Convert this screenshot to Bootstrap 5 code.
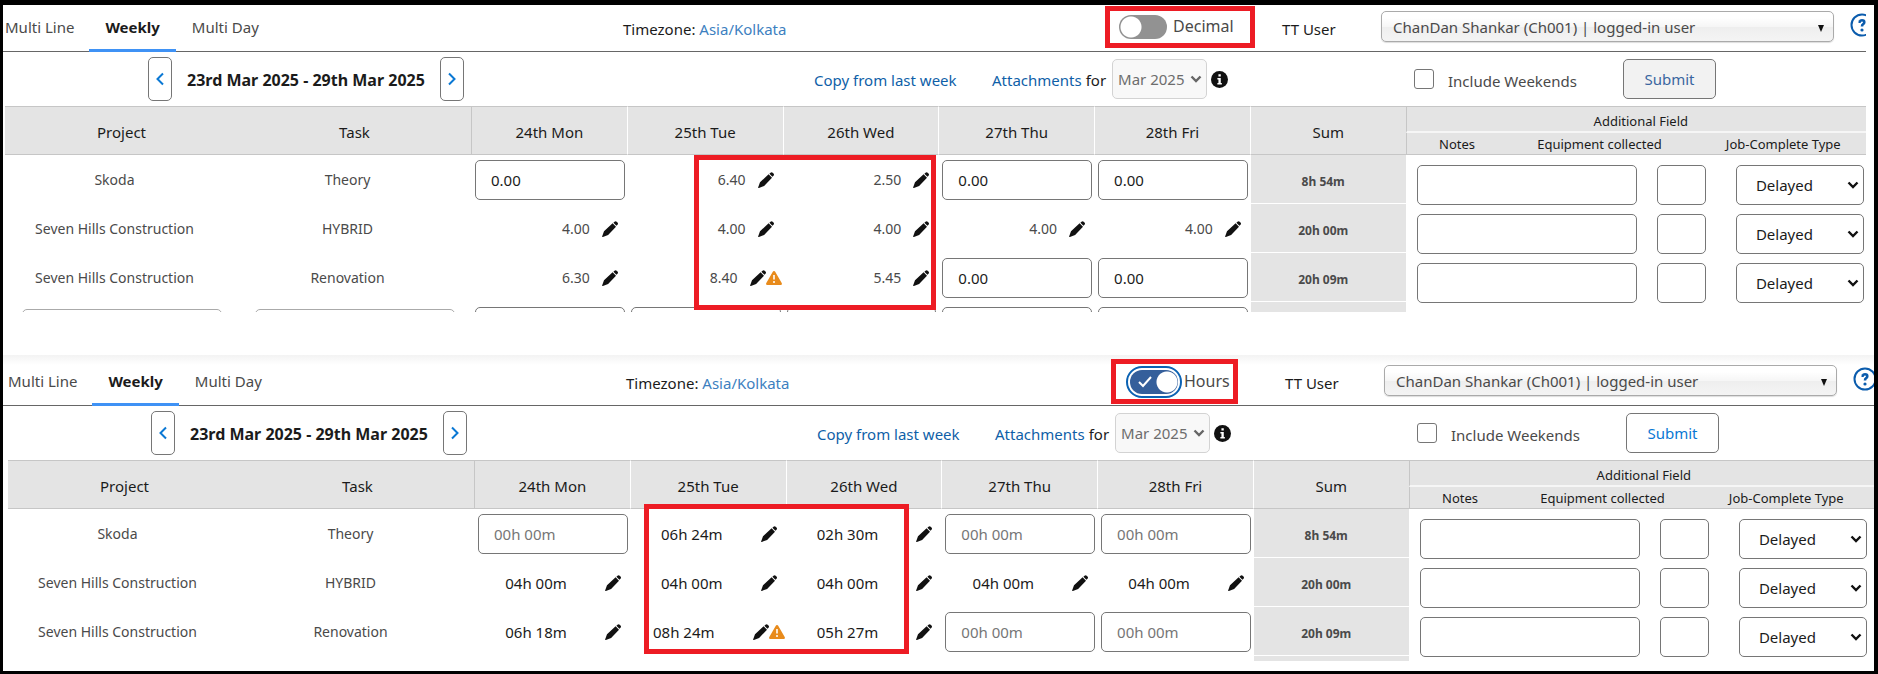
<!DOCTYPE html>
<html lang="en">
<head>
<meta charset="utf-8">
<meta name="viewport" content="width=device-width, initial-scale=1">
<title>Weekly timesheet</title>
<link href="https://cdn.jsdelivr.net/npm/bootstrap@5.3.0/dist/css/bootstrap.min.css" rel="stylesheet">
<style>
  :root { --ink: #1b1b1b; --soft: #4a4a4a; --line: #767676; --head: #e4e4e4; --rule: #c6c6c6; --flag: #ed1c24; --link: #0f5fa8; }
  body { font-family: "Noto Sans", "Open Sans", sans-serif; font-size: 15px; line-height: 20px; color: var(--ink); background: #fff; border: solid #000; border-width: 5px 4px 3px 3px; min-height: 100vh; }
  a { color: var(--link); text-decoration: none; }
  button, input, select { font: inherit; }

  .panel { overflow: hidden; }
  .panel-decimal { height: 307px; margin-right: 8px; margin-bottom: 43px; }
  .panel-hours { height: 306px; padding-left: 3px; background: linear-gradient(#f3f3f3, #fff 10px); }
  .panel-decimal .sheet { width: calc(100% + 9px); }
  .panel-hours .sheet { width: calc(100% + 4px); }

  .topbar { display: grid; grid-template-columns: 620fr 482fr 177fr 99fr 453fr 41fr; height: 47px; border-bottom: 1px solid #666; }
  .panel-hours .topbar { height: 51px; padding: 4px 0 0 3px; margin-left: -3px; }
  .topbar > *, .toolbar > * { min-width: 0; white-space: nowrap; }
  .tabs a { color: var(--soft); padding: 0 16px; height: 47px; display: flex; align-items: center; border-bottom: 3px solid transparent; }
  .tabs a:first-child { padding: 0 15px 0 2px; }
  .tabs a.active { color: var(--ink); font-weight: 700; border-color: #3f92f5; }
  .tz a { color: #3d7fbf; }

  .flag-box { border: 5px solid var(--flag); }
  .mode { height: 42px; width: 150px; margin-top: 1px; padding-left: 9px; font-size: 16px; color: var(--soft); }
  .mode label { padding-left: 6px; padding-bottom: 2px; }
  .mode-hours { height: 45px; width: 127px; margin: 0 0 0 3px; padding-left: 14px; }
  .mode .form-check-input { width: 48px; height: 24px; margin: 0; border: 0; border-radius: 12px; background: #929292 radial-gradient(circle at 12px 12px, #fff 10px, transparent 11px); box-shadow: none; }
  .mode .form-check-input:checked { background: #355f9b radial-gradient(circle at 37px 12px, #fff 10px, transparent 11px); outline: 2px solid #0b62b3; outline-offset: 2px; }
  .tick { left: 8px; top: 6px; pointer-events: none; }

  .user-select { height: 31px; margin-top: 6px; padding: 0 11px; width: 100%; border: 1px solid #aaa; border-radius: 5px; color: var(--soft); appearance: none; box-shadow: 0 1px 1px #ddd;
    background: url("data:image/svg+xml,%3Csvg xmlns='http://www.w3.org/2000/svg' viewBox='0 0 6 7'%3E%3Cpath d='M0 0h6L3 7z' fill='%23111'/%3E%3C/svg%3E") no-repeat right 9px top 13px / 6px 7px, linear-gradient(#fff 20%, #f6f6f6 50%, #eee 52%, #f4f4f4); }

  .toolbar { display: grid; grid-template-columns: 145fr 666fr 178fr 422fr 209fr 252fr; height: 54px; align-items: center; }
  .step { width: 24px; height: 44px; padding: 0; border: 1px solid var(--line); border-radius: 5px; background: #fff; color: #0a78d4; display: flex; align-items: center; justify-content: center; }
  .period { font-size: 16px; padding: 2px 15px 0; }
  .drop { padding-top: 2px; }
  .month { width: 95px; height: 40px; margin-left: 2px; padding: 0 5px; border: 1px solid #d3d3d3; border-radius: 5px; color: #6d6d6d; opacity: 1; appearance: none;
    background: #f8f8f8 url("data:image/svg+xml,%3Csvg xmlns='http://www.w3.org/2000/svg' viewBox='0 0 12 8'%3E%3Cpath d='M1.500 1.500L6 6l4.500-4.500' fill='none' stroke='%23666' stroke-width='2.400'/%3E%3C/svg%3E") no-repeat right 4px center / 12px 8px; }
  .toolbar .form-check-input { width: 20px; height: 20px; margin: 0; border: 1px solid var(--line); border-radius: 3px; }
  .weekend { padding: 3px 0 0 14px; color: var(--soft); }
  .submit { width: 93px; height: 40px; padding: 0; border: 1px solid var(--line); border-radius: 5px; background: #fff; color: #0a78d4; }
  .submit.is-idle { background: #f2f2f2; color: #3a66a0; }

  .grid-wrap { margin-left: 2px; position: relative; }
  .ts-grid { table-layout: fixed; width: 100%; border-collapse: separate; border-spacing: 0; margin: 0; color: var(--soft); font-size: 14px; }
  .ts-grid > :not(caption) > * > * { padding: 0; border: 0; background: none; box-shadow: none; }
  .c-name { width: 12.46%; } .c-day { width: 8.33%; } .c-note { width: 5.45%; } .c-equip { width: 9.84%; }
  .ts-grid > thead > tr > th { background: var(--head); color: var(--ink); font-weight: 400; font-size: 15px; text-align: center; vertical-align: middle; border-bottom: 1px solid var(--rule); }
  .ts-grid > thead > tr:first-child { height: 27px; }
  .ts-grid > thead > tr:last-child { height: 22px; }
  .ts-grid > thead > tr:first-child > th { border-top: 1px solid var(--rule); }
  .ts-grid > thead > tr > th[rowspan] { padding-top: 2px; }
  .ts-grid > thead > tr > th.day { border-left: 1px solid #fff; }
  .ts-grid > thead > tr > th.edge { border-left: 1px solid var(--rule); }
  .ts-grid > thead > tr > th.small-head { font-size: 13px; line-height: 20px; }
  .ts-grid > thead > tr > th.group { border-bottom: 2px solid #f6f6f6; padding-top: 3px; }
  .ts-grid > tbody > tr { height: 49px; }
  .ts-grid > tbody > tr > td { vertical-align: middle; }
  .ts-grid > tbody > tr > .name { text-align: center; padding-right: 14px; }
  .ts-grid > tbody > tr > .sum { background: var(--head); border-left: 1px solid #fff; border-bottom: 1px solid #fff; font-weight: 700; font-size: 12px; text-align: center; padding: 6px 10px 0 0; }
  .ts-grid > tbody > tr > .entry { padding: 5px 2px 4px 4px; }
  .ts-grid > tbody > tr > .extra { padding: 10px 11px 0; }
  .ts-grid > tbody > tr > .new-name { vertical-align: top; padding: 7px 0 0 17px; }
  .box { display: block; height: 40px; min-width: 0; border: 1px solid var(--line); border-radius: 5px; background: #fff; color: var(--ink); padding: 0 15px; font-size: 15px; }
  .box::placeholder { color: #767676; opacity: 1; }
  .entry .box { width: 100%; }
  .extra-row { display: grid; grid-template-columns: 240fr 79fr 128fr; height: 39px; }
  .extra-row input:first-child { margin-right: 20px; }
  .extra-row input:nth-child(2) { margin-right: 30px; }
  .extra-row select { padding: 0 19px; appearance: none;
    background: #fff url("data:image/svg+xml,%3Csvg xmlns='http://www.w3.org/2000/svg' viewBox='0 0 12 8'%3E%3Cpath d='M1.500 1.500L6 6l4.500-4.500' fill='none' stroke='%23111' stroke-width='2.400'/%3E%3C/svg%3E") no-repeat right 4px center / 12px 8px; }
  .done { display: flex; align-items: center; justify-content: flex-end; gap: 12px; padding-right: 9px; }
  .done.warned { padding-right: 1px; }
  .panel-hours .done { gap: 38px; color: var(--ink); font-size: 15px; }
  .icons { display: flex; }
  .icons button { border: 0; padding: 0; background: none; display: flex; color: #111; }
  .picker { width: 200px; max-width: 93%; border-color: #aaa; }
  .flag-over { position: absolute; pointer-events: none; }
  .flag-decimal { left: 36.84%; width: 12.94%; top: 49px; height: 155px; }
  .flag-hours { left: 34%; width: 14.17%; top: 44px; height: 150px; }
</style>
</head>
<body>
<svg class="d-none" aria-hidden="true">
  <symbol id="pencil" viewBox="0 0 16 16"><path d="M11.400 1.700 12.500.700a1.600 1.600 0 0 1 2.200 0l.8.800a1.600 1.600 0 0 1 0 2.200L14.400 4.800zM10.600 2.300l3.400 3.400-7.900 8.200-5.200 2a.5.500 0 0 1-.7-.7l1.800-4.900z" fill="currentColor"/></symbol>
  <symbol id="warn" viewBox="0 0 16 14"><path d="M8 0c.6 0 1 .3 1.200.7l6.500 11.300c.5.900 0 2-1.100 2H1.400c-1.100 0-1.600-1.100-1.100-2L6.800.700C7 .300 7.400 0 8 0z" fill="#e88b1c"/><path d="M8 4v4.500" stroke="#fff" stroke-width="1.600"/><circle cx="8" cy="11" r="1" fill="#fff"/></symbol>
  <symbol id="info" viewBox="0 0 16 16"><circle cx="8" cy="8" r="8" fill="#111"/><path d="M7 3h2.200v2.200H7zM6 6.500h3.200v4.700h1v1.500H6v-1.500h1V8H6z" fill="#fff"/></symbol>
  <symbol id="help" viewBox="0 0 24 24"><circle cx="12" cy="12" r="10.500" fill="none" stroke="#0b5cad" stroke-width="2"/><path d="M8.500 8.800h1.200c.4-1 1.200-1.500 2.300-1.500 1.300 0 2.300.8 2.300 2 0 1-.6 1.500-1.300 2-.7.500-1 1-1 2.200" fill="none" stroke="#0b5cad" stroke-width="2.600"/><circle cx="12" cy="17" r="1.600" fill="#0b5cad"/></symbol>
  <symbol id="prev" viewBox="0 0 10 14"><path d="M8 1.500 2.500 7 8 12.500" fill="none" stroke="currentColor" stroke-width="2"/></symbol>
  <symbol id="next" viewBox="0 0 10 14"><path d="M2 1.500 7.500 7 2 12.500" fill="none" stroke="currentColor" stroke-width="2"/></symbol>
</svg>

<section class="panel panel-decimal" aria-label="Timesheet in decimal format">
  <div class="sheet">
    <header class="topbar">
      <nav class="tabs d-flex"><a href="#">Multi Line</a><a class="active" href="#" aria-current="page">Weekly</a><a href="#">Multi Day</a></nav>
      <div class="tz d-flex align-items-center">Timezone:&nbsp; <a href="#">Asia/Kolkata</a></div>
      <div><div class="mode flag-box d-flex align-items-center"><input class="form-check-input" type="checkbox" role="switch" id="mode1"><label for="mode1">Decimal</label></div></div>
      <label class="d-flex align-items-center" for="user1">TT User</label>
      <div><select class="user-select" id="user1"><option>ChanDan Shankar (Ch001) | logged-in user</option></select></div>
      <a class="ps-3 pt-2" href="#" aria-label="Help"><svg width="24" height="24"><use href="#help"/></svg></a>
    </header>
    <div class="toolbar">
      <span></span>
      <div class="d-flex align-items-center">
        <button class="step" type="button" aria-label="Previous week"><svg width="10" height="14"><use href="#prev"/></svg></button>
        <strong class="period">23rd Mar 2025 - 29th Mar 2025</strong>
        <button class="step" type="button" aria-label="Next week"><svg width="10" height="14"><use href="#next"/></svg></button>
      </div>
      <a class="drop" href="#">Copy from last week</a>
      <div class="d-flex align-items-center gap-1"><a class="drop" href="#">Attachments</a><label class="drop" for="month1">for</label><select class="month" id="month1" disabled><option>Mar 2025</option></select><svg width="17" height="17"><use href="#info"/></svg></div>
      <div class="d-flex align-items-center"><input class="form-check-input" type="checkbox" id="we1"><label class="weekend" for="we1">Include Weekends</label></div>
      <div><button class="submit is-idle" type="button">Submit</button></div>
    </div>
    <div class="grid-wrap">
      <table class="table ts-grid">
        <colgroup><col class="c-name"><col class="c-name"><col class="c-day" span="6"><col class="c-note"><col class="c-equip"><col></colgroup>
        <thead>
          <tr><th rowspan="2">Project</th><th rowspan="2">Task</th><th class="edge" rowspan="2">24th Mon</th><th class="day" rowspan="2">25th Tue</th><th class="day" rowspan="2">26th Wed</th><th class="day" rowspan="2">27th Thu</th><th class="day" rowspan="2">28th Fri</th><th class="day" rowspan="2">Sum</th><th class="edge small-head group" colspan="3">Additional Field</th></tr>
          <tr><th class="edge small-head">Notes</th><th class="small-head">Equipment collected</th><th class="small-head">Job-Complete Type</th></tr>
        </thead>
        <tbody>
          <tr>
            <td class="name">Skoda</td><td class="name">Theory</td>
            <td class="entry"><input class="box" value="0.00" aria-label="Skoda, 24th Mon"></td>
            <td><div class="done">6.40<span class="icons"><button type="button" aria-label="Edit"><svg width="16" height="16"><use href="#pencil"/></svg></button></span></div></td>
            <td><div class="done">2.50<span class="icons"><button type="button" aria-label="Edit"><svg width="16" height="16"><use href="#pencil"/></svg></button></span></div></td>
            <td class="entry"><input class="box" value="0.00" aria-label="Skoda, 27th Thu"></td>
            <td class="entry"><input class="box" value="0.00" aria-label="Skoda, 28th Fri"></td>
            <td class="sum">8h 54m</td>
            <td class="extra" colspan="3"><div class="extra-row"><input class="box" aria-label="Notes"><input class="box" aria-label="Equipment collected"><select class="box" aria-label="Job-Complete Type"><option>Delayed</option></select></div></td>
          </tr>
          <tr>
            <td class="name">Seven Hills Construction</td><td class="name">HYBRID</td>
            <td><div class="done">4.00<span class="icons"><button type="button" aria-label="Edit"><svg width="16" height="16"><use href="#pencil"/></svg></button></span></div></td>
            <td><div class="done">4.00<span class="icons"><button type="button" aria-label="Edit"><svg width="16" height="16"><use href="#pencil"/></svg></button></span></div></td>
            <td><div class="done">4.00<span class="icons"><button type="button" aria-label="Edit"><svg width="16" height="16"><use href="#pencil"/></svg></button></span></div></td>
            <td><div class="done">4.00<span class="icons"><button type="button" aria-label="Edit"><svg width="16" height="16"><use href="#pencil"/></svg></button></span></div></td>
            <td><div class="done">4.00<span class="icons"><button type="button" aria-label="Edit"><svg width="16" height="16"><use href="#pencil"/></svg></button></span></div></td>
            <td class="sum">20h 00m</td>
            <td class="extra" colspan="3"><div class="extra-row"><input class="box" aria-label="Notes"><input class="box" aria-label="Equipment collected"><select class="box" aria-label="Job-Complete Type"><option>Delayed</option></select></div></td>
          </tr>
          <tr>
            <td class="name">Seven Hills Construction</td><td class="name">Renovation</td>
            <td><div class="done">6.30<span class="icons"><button type="button" aria-label="Edit"><svg width="16" height="16"><use href="#pencil"/></svg></button></span></div></td>
            <td><div class="done warned">8.40<span class="icons"><button type="button" aria-label="Edit"><svg width="16" height="16"><use href="#pencil"/></svg></button><svg width="16" height="14" class="align-self-center"><use href="#warn"/></svg></span></div></td>
            <td><div class="done">5.45<span class="icons"><button type="button" aria-label="Edit"><svg width="16" height="16"><use href="#pencil"/></svg></button></span></div></td>
            <td class="entry"><input class="box" value="0.00" aria-label="Renovation, 27th Thu"></td>
            <td class="entry"><input class="box" value="0.00" aria-label="Renovation, 28th Fri"></td>
            <td class="sum">20h 09m</td>
            <td class="extra" colspan="3"><div class="extra-row"><input class="box" aria-label="Notes"><input class="box" aria-label="Equipment collected"><select class="box" aria-label="Job-Complete Type"><option>Delayed</option></select></div></td>
          </tr>
          <tr>
            <td class="new-name"><input class="box picker" aria-label="Project"></td><td class="new-name"><input class="box picker" aria-label="Task"></td>
            <td class="entry"><input class="box" aria-label="New line, 24th Mon"></td><td class="entry"><input class="box" aria-label="New line, 25th Tue"></td><td class="entry"><input class="box" aria-label="New line, 26th Wed"></td><td class="entry"><input class="box" aria-label="New line, 27th Thu"></td><td class="entry"><input class="box" aria-label="New line, 28th Fri"></td>
            <td class="sum"></td>
            <td class="extra" colspan="3"><div class="extra-row"><input class="box" aria-label="Notes"><input class="box" aria-label="Equipment collected"><select class="box" aria-label="Job-Complete Type"><option></option></select></div></td>
          </tr>
        </tbody>
      </table>
      <div class="flag-box flag-over flag-decimal"></div>
    </div>
  </div>
</section>

<section class="panel panel-hours" aria-label="Timesheet in hours format">
  <div class="sheet">
    <header class="topbar">
      <nav class="tabs d-flex"><a href="#">Multi Line</a><a class="active" href="#" aria-current="page">Weekly</a><a href="#">Multi Day</a></nav>
      <div class="tz d-flex align-items-center">Timezone:&nbsp; <a href="#">Asia/Kolkata</a></div>
      <div><div class="mode mode-hours flag-box d-flex align-items-center"><span class="position-relative d-flex"><input class="form-check-input" type="checkbox" role="switch" id="mode2" checked><svg class="tick position-absolute" width="14" height="12" viewBox="0 0 14 12"><path d="M1 6l4 4 8-9" fill="none" stroke="#fff" stroke-width="2"/></svg></span><label for="mode2">Hours</label></div></div>
      <label class="d-flex align-items-center" for="user2">TT User</label>
      <div><select class="user-select" id="user2"><option>ChanDan Shankar (Ch001) | logged-in user</option></select></div>
      <a class="ps-3 pt-2" href="#" aria-label="Help"><svg width="24" height="24"><use href="#help"/></svg></a>
    </header>
    <div class="toolbar">
      <span></span>
      <div class="d-flex align-items-center">
        <button class="step" type="button" aria-label="Previous week"><svg width="10" height="14"><use href="#prev"/></svg></button>
        <strong class="period">23rd Mar 2025 - 29th Mar 2025</strong>
        <button class="step" type="button" aria-label="Next week"><svg width="10" height="14"><use href="#next"/></svg></button>
      </div>
      <a class="drop" href="#">Copy from last week</a>
      <div class="d-flex align-items-center gap-1"><a class="drop" href="#">Attachments</a><label class="drop" for="month2">for</label><select class="month" id="month2" disabled><option>Mar 2025</option></select><svg width="17" height="17"><use href="#info"/></svg></div>
      <div class="d-flex align-items-center"><input class="form-check-input" type="checkbox" id="we2"><label class="weekend" for="we2">Include Weekends</label></div>
      <div><button class="submit" type="button">Submit</button></div>
    </div>
    <div class="grid-wrap">
      <table class="table ts-grid">
        <colgroup><col class="c-name"><col class="c-name"><col class="c-day" span="6"><col class="c-note"><col class="c-equip"><col></colgroup>
        <thead>
          <tr><th rowspan="2">Project</th><th rowspan="2">Task</th><th class="edge" rowspan="2">24th Mon</th><th class="day" rowspan="2">25th Tue</th><th class="day" rowspan="2">26th Wed</th><th class="day" rowspan="2">27th Thu</th><th class="day" rowspan="2">28th Fri</th><th class="day" rowspan="2">Sum</th><th class="edge small-head group" colspan="3">Additional Field</th></tr>
          <tr><th class="edge small-head">Notes</th><th class="small-head">Equipment collected</th><th class="small-head">Job-Complete Type</th></tr>
        </thead>
        <tbody>
          <tr>
            <td class="name">Skoda</td><td class="name">Theory</td>
            <td class="entry"><input class="box" placeholder="00h 00m" aria-label="Skoda, 24th Mon"></td>
            <td><div class="done">06h 24m<span class="icons"><button type="button" aria-label="Edit"><svg width="16" height="16"><use href="#pencil"/></svg></button></span></div></td>
            <td><div class="done">02h 30m<span class="icons"><button type="button" aria-label="Edit"><svg width="16" height="16"><use href="#pencil"/></svg></button></span></div></td>
            <td class="entry"><input class="box" placeholder="00h 00m" aria-label="Skoda, 27th Thu"></td>
            <td class="entry"><input class="box" placeholder="00h 00m" aria-label="Skoda, 28th Fri"></td>
            <td class="sum">8h 54m</td>
            <td class="extra" colspan="3"><div class="extra-row"><input class="box" aria-label="Notes"><input class="box" aria-label="Equipment collected"><select class="box" aria-label="Job-Complete Type"><option>Delayed</option></select></div></td>
          </tr>
          <tr>
            <td class="name">Seven Hills Construction</td><td class="name">HYBRID</td>
            <td><div class="done">04h 00m<span class="icons"><button type="button" aria-label="Edit"><svg width="16" height="16"><use href="#pencil"/></svg></button></span></div></td>
            <td><div class="done">04h 00m<span class="icons"><button type="button" aria-label="Edit"><svg width="16" height="16"><use href="#pencil"/></svg></button></span></div></td>
            <td><div class="done">04h 00m<span class="icons"><button type="button" aria-label="Edit"><svg width="16" height="16"><use href="#pencil"/></svg></button></span></div></td>
            <td><div class="done">04h 00m<span class="icons"><button type="button" aria-label="Edit"><svg width="16" height="16"><use href="#pencil"/></svg></button></span></div></td>
            <td><div class="done">04h 00m<span class="icons"><button type="button" aria-label="Edit"><svg width="16" height="16"><use href="#pencil"/></svg></button></span></div></td>
            <td class="sum">20h 00m</td>
            <td class="extra" colspan="3"><div class="extra-row"><input class="box" aria-label="Notes"><input class="box" aria-label="Equipment collected"><select class="box" aria-label="Job-Complete Type"><option>Delayed</option></select></div></td>
          </tr>
          <tr>
            <td class="name">Seven Hills Construction</td><td class="name">Renovation</td>
            <td><div class="done">06h 18m<span class="icons"><button type="button" aria-label="Edit"><svg width="16" height="16"><use href="#pencil"/></svg></button></span></div></td>
            <td><div class="done warned">08h 24m<span class="icons"><button type="button" aria-label="Edit"><svg width="16" height="16"><use href="#pencil"/></svg></button><svg width="16" height="14" class="align-self-center"><use href="#warn"/></svg></span></div></td>
            <td><div class="done">05h 27m<span class="icons"><button type="button" aria-label="Edit"><svg width="16" height="16"><use href="#pencil"/></svg></button></span></div></td>
            <td class="entry"><input class="box" placeholder="00h 00m" aria-label="Renovation, 27th Thu"></td>
            <td class="entry"><input class="box" placeholder="00h 00m" aria-label="Renovation, 28th Fri"></td>
            <td class="sum">20h 09m</td>
            <td class="extra" colspan="3"><div class="extra-row"><input class="box" aria-label="Notes"><input class="box" aria-label="Equipment collected"><select class="box" aria-label="Job-Complete Type"><option>Delayed</option></select></div></td>
          </tr>
          <tr>
            <td></td><td></td>
            <td class="entry"><input class="box" aria-label="New line, 24th Mon"></td><td class="entry"><input class="box" aria-label="New line, 25th Tue"></td><td class="entry"><input class="box" aria-label="New line, 26th Wed"></td><td class="entry"><input class="box" aria-label="New line, 27th Thu"></td><td class="entry"><input class="box" aria-label="New line, 28th Fri"></td>
            <td class="sum"></td><td colspan="3"></td>
          </tr>
        </tbody>
      </table>
      <div class="flag-box flag-over flag-hours"></div>
    </div>
  </div>
</section>
<script src="https://cdn.jsdelivr.net/npm/bootstrap@5.3.0/dist/js/bootstrap.bundle.min.js"></script>
</body>
</html>
